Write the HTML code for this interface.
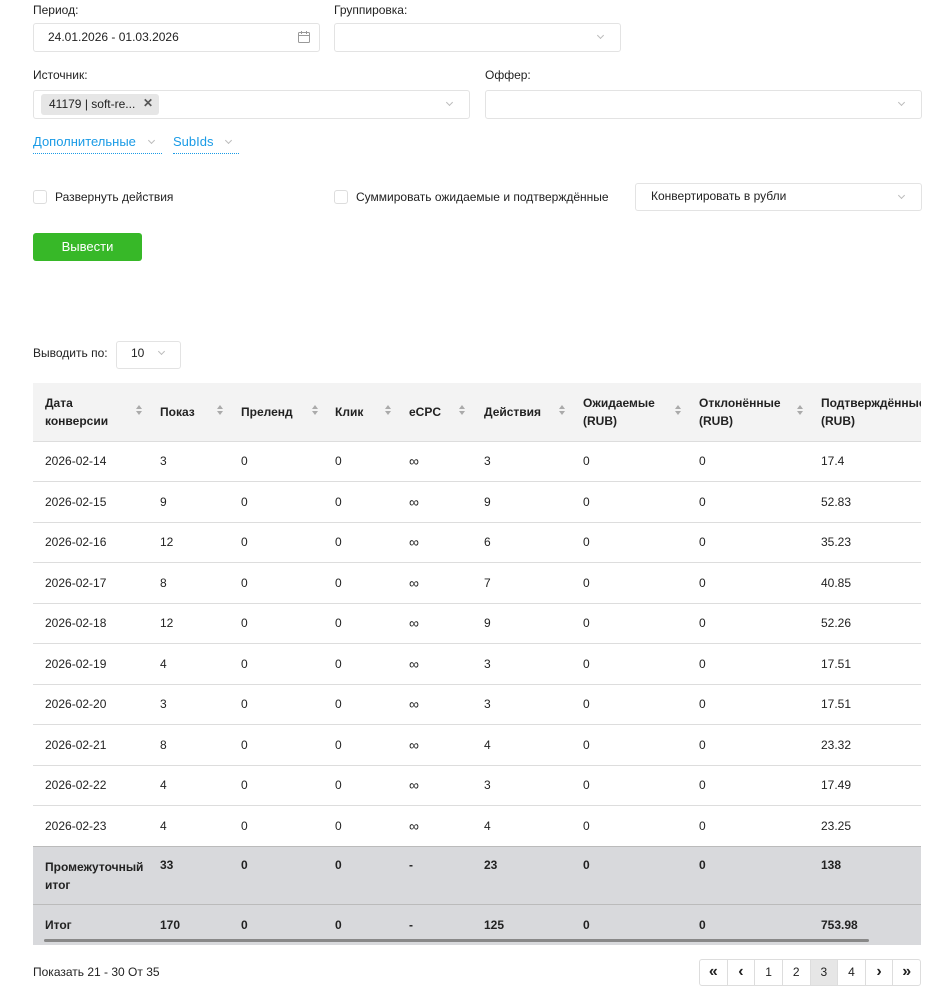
<!DOCTYPE html>
<html><head><meta charset="utf-8"><style>
*{box-sizing:border-box;margin:0;padding:0}
body{width:949px;height:1005px;background:#fff;font-family:"Liberation Sans",sans-serif;font-size:12px;color:#222;position:relative;overflow:hidden}
.a{position:absolute;white-space:nowrap}
.box{position:absolute;border:1px solid #e3e3e3;border-radius:3px;background:#fff}
.chev{position:absolute;width:5px;height:5px;border-right:1px solid #bbb;border-bottom:1px solid #bbb;transform:rotate(45deg)}
.cb{position:absolute;width:14px;height:14px;border:1px solid #ddd;border-radius:3px}
.link{position:absolute;color:#1a9be6;font-size:13px;border-bottom:1px dotted #1a9be6;padding-bottom:4px}
.wrap{position:absolute;left:33px;top:383px;width:888px;height:562px;overflow:hidden}
table{width:888px;border-collapse:collapse;table-layout:fixed}
td,th{text-align:left;font-size:12px;vertical-align:middle;padding:0 0 0 12px;white-space:nowrap}
th{background:#f3f3f3;height:58px;font-weight:bold;position:relative;line-height:18px}
tbody td{height:40.5px;border-top:1px solid #ddd}
.inf{font-size:14px;line-height:14px}
tr.sum td{background:#d8d9dc;font-weight:bold;border-top:1px solid #bbb}
.s{position:absolute;top:22px;width:0;height:0}
.s:before{content:"";position:absolute;left:-3px;top:0;border:3.5px solid transparent;border-bottom:4px solid #aaa;border-top:0}
.s:after{content:"";position:absolute;left:-3px;top:6px;border:3.5px solid transparent;border-top:4px solid #aaa;border-bottom:0}
.pg{position:absolute;top:959px;height:27px;border:1px solid #ddd;border-radius:3px;display:flex;left:699px;width:222px}
.pg div{flex:1;border-left:1px solid #ddd;text-align:center;line-height:25px;font-size:12px}
.pg div:first-child{border-left:0}
.pg .b{font-size:16px;font-weight:bold;line-height:23px}
</style></head><body>
<div class="a" style="left:33px;top:3px">Период:</div>
<div class="box" style="left:33px;top:23px;width:287px;height:29px"></div>
<div class="a" style="left:48px;top:30px">24.01.2026 - 01.03.2026</div>
<svg class="a" style="left:297px;top:30px" width="14" height="14" viewBox="0 0 14 14" fill="none" stroke="#999" stroke-width="1"><rect x="1.5" y="2.5" width="11" height="10" rx="1"/><path d="M1.5 5.5h11M4.5 1v3M9.5 1v3"/></svg>
<div class="a" style="left:334px;top:3px">Группировка:</div>
<div class="box" style="left:334px;top:23px;width:287px;height:29px"></div>
<div class="chev" style="left:598px;top:33px"></div>
<div class="a" style="left:33px;top:68px">Источник:</div>
<div class="box" style="left:33px;top:90px;width:437px;height:29px"></div>
<div class="a" style="left:41px;top:94px;width:118px;height:21px;background:#e6e6e6;border-radius:3px"></div>
<div class="a" style="left:49px;top:97px">41179 | soft-re...</div>
<div class="a" style="left:143px;top:96px;font-weight:bold;color:#555">✕</div>
<div class="chev" style="left:447px;top:100px"></div>
<div class="a" style="left:485px;top:68px">Оффер:</div>
<div class="box" style="left:485px;top:90px;width:437px;height:29px"></div>
<div class="chev" style="left:899px;top:100px"></div>
<div class="link" style="left:33px;top:134px;width:129px">Дополнительные</div>
<div class="chev" style="left:149px;top:138px"></div>
<div class="link" style="left:173px;top:134px;width:66px">SubIds</div>
<div class="chev" style="left:226px;top:138px"></div>
<div class="cb" style="left:33px;top:190px"></div>
<div class="a" style="left:55px;top:190px">Развернуть действия</div>
<div class="cb" style="left:334px;top:190px"></div>
<div class="a" style="left:356px;top:190px">Суммировать ожидаемые и подтверждённые</div>
<div class="box" style="left:635px;top:183px;width:287px;height:28px"></div>
<div class="a" style="left:651px;top:189px">Конвертировать в рубли</div>
<div class="chev" style="left:899px;top:193px"></div>
<div class="a" style="left:33px;top:233px;width:109px;height:28px;background:#37b828;border-radius:3px;color:#fff;text-align:center;line-height:28px;font-size:13px">Вывести</div>
<div class="a" style="left:33px;top:346px">Выводить по:</div>
<div class="box" style="left:116px;top:341px;width:65px;height:28px"></div>
<div class="a" style="left:131px;top:346px">10</div>
<div class="chev" style="left:159px;top:349px"></div>
<div class="wrap">
<table>
<colgroup><col style="width:115px"><col style="width:81px"><col style="width:94px"><col style="width:74px"><col style="width:75px"><col style="width:99px"><col style="width:116px"><col style="width:122px"><col style="width:112px"></colgroup>
<thead><tr>
<th>Дата<br>конверсии<span class="s" style="left:106px"></span></th>
<th>Показ<span class="s" style="left:72px"></span></th>
<th>Преленд<span class="s" style="left:86px"></span></th>
<th>Клик<span class="s" style="left:65px"></span></th>
<th>eCPC<span class="s" style="left:65px"></span></th>
<th>Действия<span class="s" style="left:90px"></span></th>
<th>Ожидаемые<br>(RUB)<span class="s" style="left:107px"></span></th>
<th>Отклонённые<br>(RUB)<span class="s" style="left:113px"></span></th>
<th>Подтверждённые<br>(RUB)</th>
</tr></thead>
<tbody>
<tr><td>2026-02-14</td><td>3</td><td>0</td><td>0</td><td class="inf">∞</td><td>3</td><td>0</td><td>0</td><td>17.4</td></tr>
<tr><td>2026-02-15</td><td>9</td><td>0</td><td>0</td><td class="inf">∞</td><td>9</td><td>0</td><td>0</td><td>52.83</td></tr>
<tr><td>2026-02-16</td><td>12</td><td>0</td><td>0</td><td class="inf">∞</td><td>6</td><td>0</td><td>0</td><td>35.23</td></tr>
<tr><td>2026-02-17</td><td>8</td><td>0</td><td>0</td><td class="inf">∞</td><td>7</td><td>0</td><td>0</td><td>40.85</td></tr>
<tr><td>2026-02-18</td><td>12</td><td>0</td><td>0</td><td class="inf">∞</td><td>9</td><td>0</td><td>0</td><td>52.26</td></tr>
<tr><td>2026-02-19</td><td>4</td><td>0</td><td>0</td><td class="inf">∞</td><td>3</td><td>0</td><td>0</td><td>17.51</td></tr>
<tr><td>2026-02-20</td><td>3</td><td>0</td><td>0</td><td class="inf">∞</td><td>3</td><td>0</td><td>0</td><td>17.51</td></tr>
<tr><td>2026-02-21</td><td>8</td><td>0</td><td>0</td><td class="inf">∞</td><td>4</td><td>0</td><td>0</td><td>23.32</td></tr>
<tr><td>2026-02-22</td><td>4</td><td>0</td><td>0</td><td class="inf">∞</td><td>3</td><td>0</td><td>0</td><td>17.49</td></tr>
<tr><td>2026-02-23</td><td>4</td><td>0</td><td>0</td><td class="inf">∞</td><td>4</td><td>0</td><td>0</td><td>23.25</td></tr>
<tr class="sum"><td style="height:58px;vertical-align:top;padding-top:11px;line-height:18px">Промежуточный<br>итог</td><td style="vertical-align:top;padding-top:11px">33</td><td style="vertical-align:top;padding-top:11px">0</td><td style="vertical-align:top;padding-top:11px">0</td><td style="vertical-align:top;padding-top:11px">-</td><td style="vertical-align:top;padding-top:11px">23</td><td style="vertical-align:top;padding-top:11px">0</td><td style="vertical-align:top;padding-top:11px">0</td><td style="vertical-align:top;padding-top:11px">138</td></tr>
<tr class="sum"><td style="height:40px">Итог</td><td>170</td><td>0</td><td>0</td><td>-</td><td>125</td><td>0</td><td>0</td><td>753.98</td></tr>
</tbody></table>
</div>
<div class="a" style="left:44px;top:939px;width:825px;height:3px;background:#888;border-radius:2px"></div>
<div class="a" style="left:33px;top:965px">Показать 21 - 30 От 35</div>
<div class="pg"><div class="b">«</div><div class="b">‹</div><div>1</div><div>2</div><div style="background:#e6e6e6">3</div><div>4</div><div class="b">›</div><div class="b">»</div></div>
</body></html>
